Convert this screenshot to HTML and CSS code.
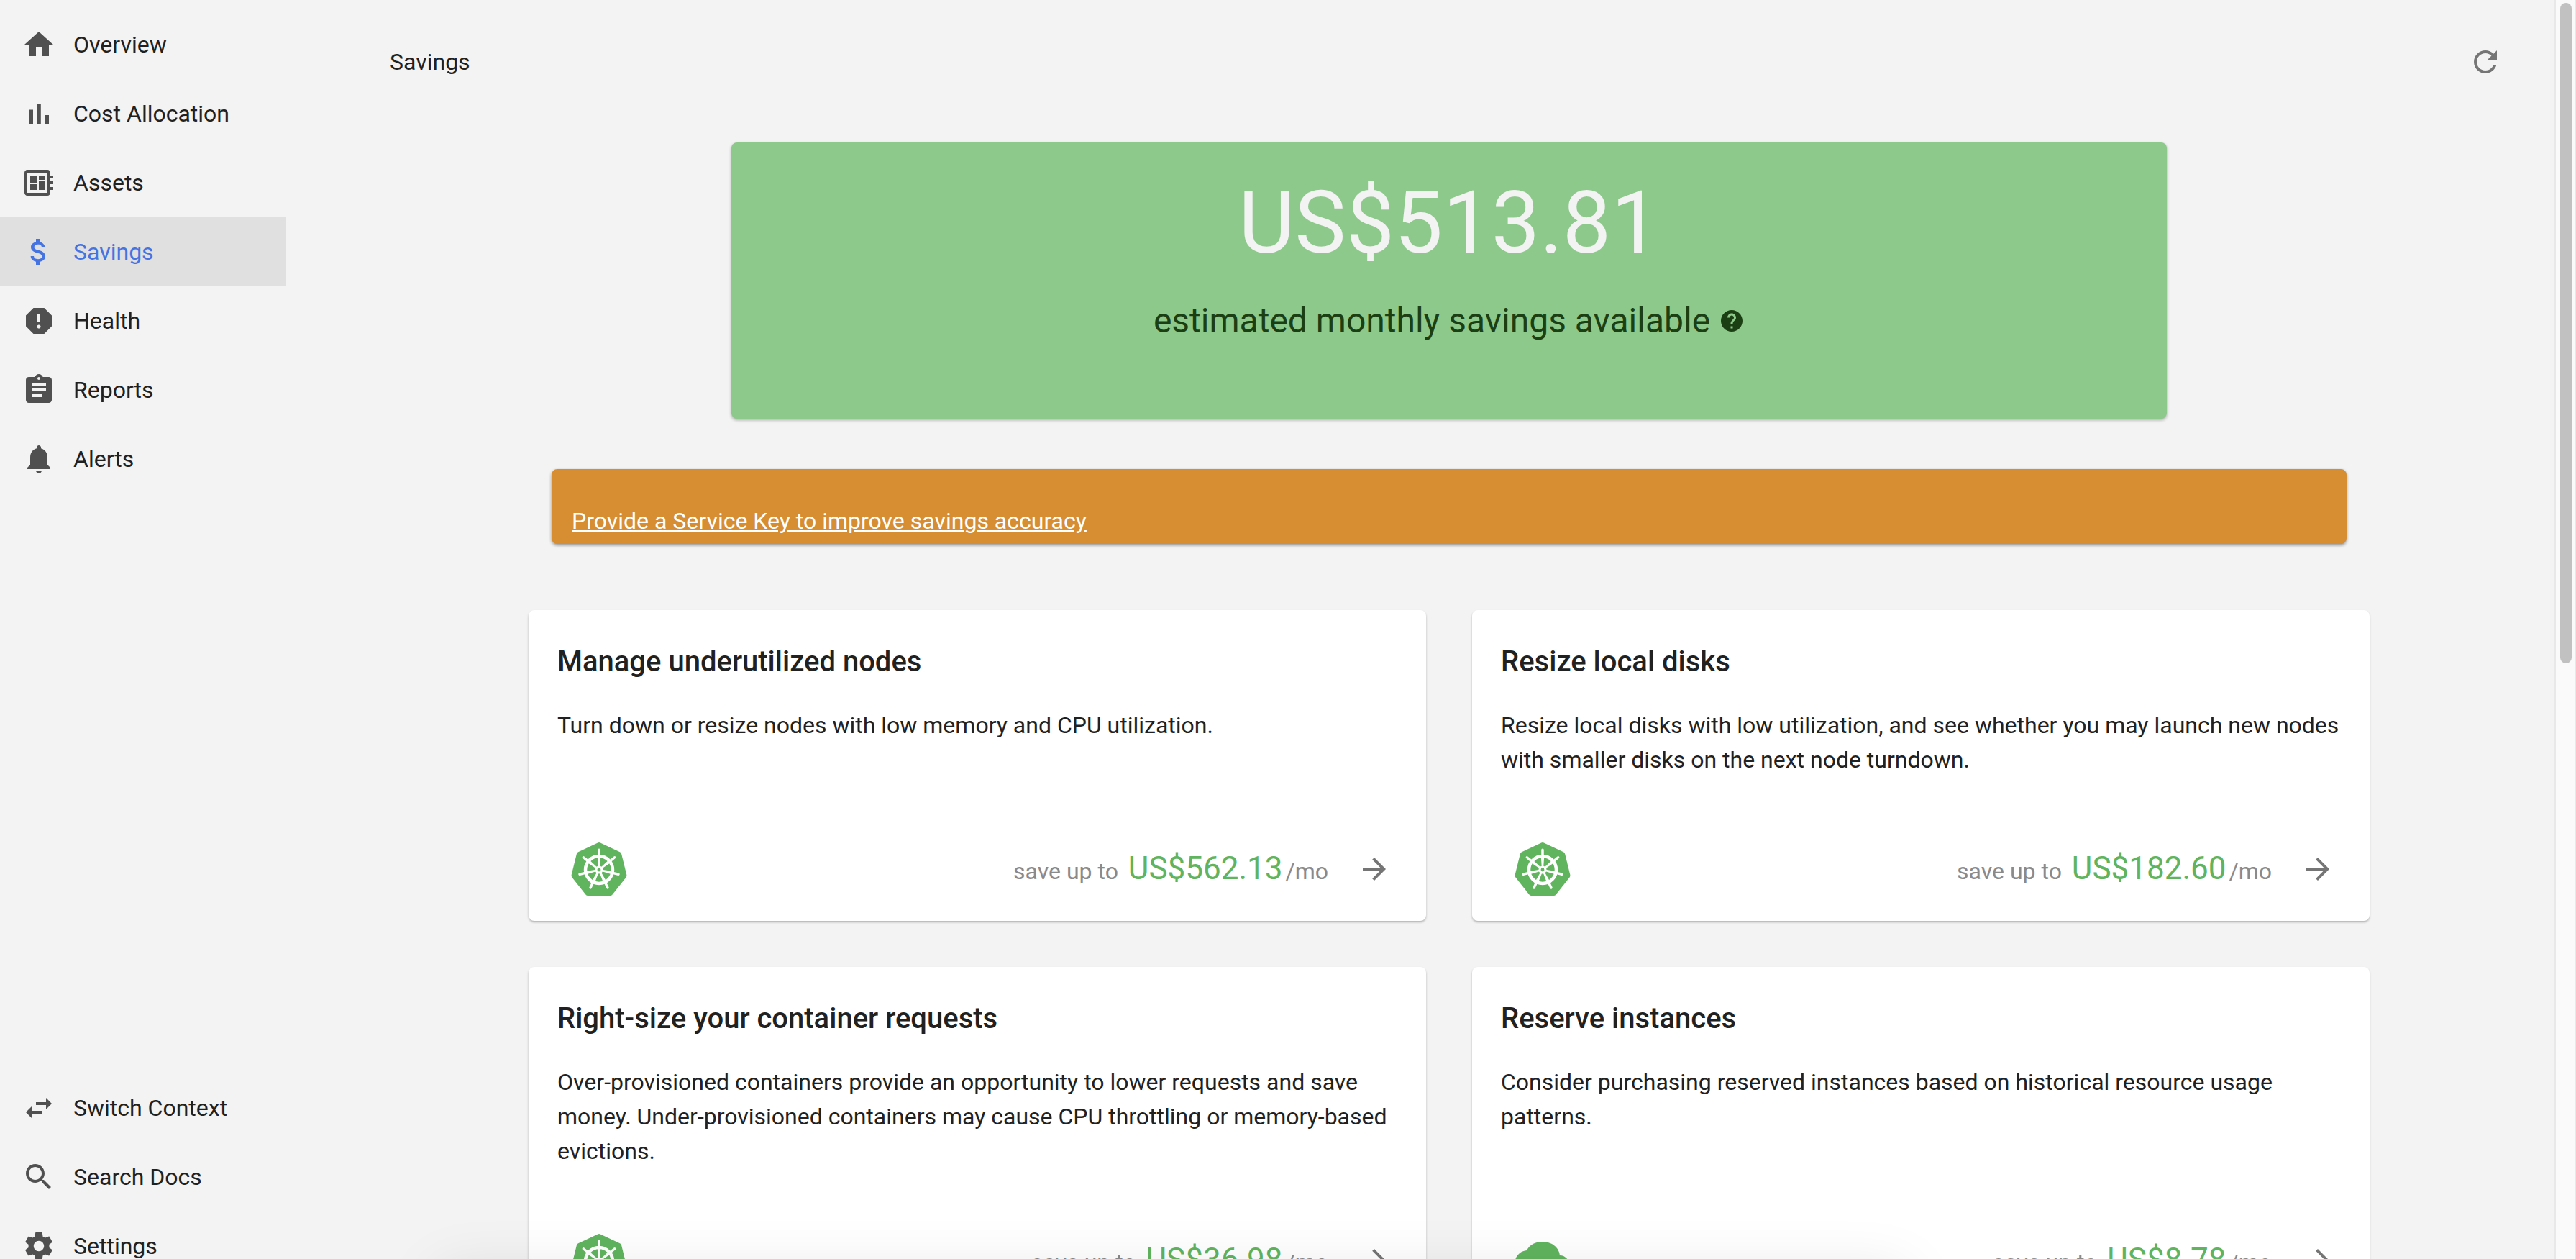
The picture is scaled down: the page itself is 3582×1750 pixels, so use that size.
FILE: index.html
```html
<!DOCTYPE html>
<html lang="en">
<head>
<meta charset="utf-8">
<meta name="viewport" content="width=device-width, initial-scale=1">
<title>Savings</title>
<link rel="stylesheet" href="styles.css">
</head>
<body>
<svg class="sprite" aria-hidden="true">
  <symbol id="arrow" viewBox="0 0 24 24"><path d="M12 4l-1.41 1.41L16.17 11H4v2h12.17l-5.58 5.59L12 20l8-8z"/></symbol>
  <symbol id="helm" viewBox="-39 -40 78 78">
    <path fill="#60b45e" stroke="#60b45e" stroke-width="8" stroke-linejoin="round" d="M0-33 26.500-20.500 33.500 7.800 15 31H-15L-33.500 7.800-26.500-20.500z"/>
    <g fill="none" stroke="#fff" stroke-linecap="round">
      <circle r="18.500" stroke-width="4.400"/>
      <g stroke-width="3.400">
        <path d="M0-27V-18"/>
        <path d="M0-27V-18" transform="rotate(51.430)"/>
        <path d="M0-27V-18" transform="rotate(102.860)"/>
        <path d="M0-27V-18" transform="rotate(154.290)"/>
        <path d="M0-27V-18" transform="rotate(205.710)"/>
        <path d="M0-27V-18" transform="rotate(257.140)"/>
        <path d="M0-27V-18" transform="rotate(308.570)"/>
      </g>
    </g>
    <g fill="#fff">
      <path d="M-2.200-18H2.200L1-2H-1z"/>
      <path d="M-2.200-18H2.200L1-2H-1z" transform="rotate(51.430)"/>
      <path d="M-2.200-18H2.200L1-2H-1z" transform="rotate(102.860)"/>
      <path d="M-2.200-18H2.200L1-2H-1z" transform="rotate(154.290)"/>
      <path d="M-2.200-18H2.200L1-2H-1z" transform="rotate(205.710)"/>
      <path d="M-2.200-18H2.200L1-2H-1z" transform="rotate(257.140)"/>
      <path d="M-2.200-18H2.200L1-2H-1z" transform="rotate(308.570)"/>
      <circle r="5.400"/>
    </g>
    <circle r="2.400" fill="#60b45e"/>
  </symbol>
  <symbol id="cloud" viewBox="-40 -40 80 80"><path fill="#60b45e" d="M-22-14C-18-22-10-26 0-26 13-26 23-18 24-7 29-7 34-4 36 1 40 10 35 23 22 24H-22C-33 24-39 17-39 6-39-5-32-13-22-14z"/></symbol>
</svg>
<div class="app">
  <aside class="sidebar">
    <nav class="menu" aria-label="Main">
      <a class="item" href="#"><svg class="icon" viewBox="0 0 24 24"><path d="M10 20v-6h4v6h5v-8h3L12 3 2 12h3v8z"/></svg>Overview</a>
      <a class="item" href="#"><svg class="icon" viewBox="0 0 24 24"><path d="M5 9.200h3V19H5zM10.600 5h2.800v14h-2.800zm5.600 8H19v6h-2.800z"/></svg>Cost Allocation</a>
      <a class="item" href="#"><svg class="icon" viewBox="0 0 24 24"><path d="M22 9V7h-2V5c0-1.100-.9-2-2-2H4c-1.100 0-2 .9-2 2v14c0 1.100.9 2 2 2h14c1.100 0 2-.9 2-2v-2h2v-2h-2v-2h2v-2h-2V9h2zm-4 10H4V5h14v14zM6 13h5v4H6zm6-6h4v3h-4zM6 7h5v5H6zm6 4h4v6h-4z"/></svg>Assets</a>
      <a class="item item-active" href="#" aria-current="page"><svg class="icon" viewBox="0 0 24 24"><path d="M11.800 10.900c-2.270-.59-3-1.200-3-2.150 0-1.090 1.010-1.850 2.700-1.850 1.780 0 2.440.85 2.500 2.100h2.210c-.07-1.720-1.120-3.300-3.210-3.810V3h-3v2.160c-1.940.42-3.500 1.680-3.500 3.610 0 2.310 1.910 3.460 4.700 4.130 2.500.6 3 1.480 3 2.410 0 .69-.49 1.790-2.700 1.790-2.060 0-2.870-.92-2.980-2.100h-2.200c.12 2.190 1.760 3.420 3.680 3.830V21h3v-2.150c1.950-.37 3.500-1.500 3.500-3.550 0-2.840-2.430-3.810-4.700-4.400z"/></svg>Savings</a>
      <a class="item" href="#"><svg class="icon" viewBox="0 0 24 24"><path d="M15.730 3H8.270L3 8.270v7.460L8.270 21h7.460L21 15.730V8.270L15.730 3zM12 17.300c-.72 0-1.300-.58-1.300-1.300 0-.72.58-1.300 1.300-1.300.72 0 1.300.58 1.300 1.300 0 .72-.58 1.300-1.300 1.300zm1-4.300h-2V7h2v6z"/></svg>Health</a>
      <a class="item" href="#"><svg class="icon" viewBox="0 0 24 24"><path d="M19 3h-4.180C14.400 1.840 13.300 1 12 1c-1.300 0-2.400.84-2.820 2H5c-1.100 0-2 .9-2 2v14c0 1.100.9 2 2 2h14c1.100 0 2-.9 2-2V5c0-1.100-.9-2-2-2zm-7 0c.55 0 1 .45 1 1s-.45 1-1 1-1-.45-1-1 .45-1 1-1zm2 14H7v-2h7v2zm3-4H7v-2h10v2zm0-4H7V7h10v2z"/></svg>Reports</a>
      <a class="item" href="#"><svg class="icon" viewBox="0 0 24 24"><path d="M12 22c1.100 0 2-.9 2-2h-4c0 1.100.89 2 2 2zm6-6v-5c0-3.070-1.640-5.640-4.500-6.320V4c0-.83-.67-1.500-1.500-1.500s-1.500.67-1.500 1.500v.68C7.630 5.360 6 7.920 6 11v5l-2 2v1h16v-1l-2-2z"/></svg>Alerts</a>
    </nav>
    <nav class="menu" aria-label="Tools">
      <a class="item" href="#"><svg class="icon" viewBox="0 0 24 24"><path d="M6.990 11L3 15l3.990 4v-3H14v-2H6.990v-3zM21 9l-3.990-4v3H10v2h7.010v3L21 9z"/></svg>Switch Context</a>
      <a class="item" href="#"><svg class="icon" viewBox="0 0 24 24"><path d="M15.500 14h-.79l-.28-.27C15.410 12.590 16 11.110 16 9.500 16 5.910 13.090 3 9.500 3S3 5.910 3 9.500 5.910 16 9.500 16c1.610 0 3.090-.59 4.230-1.570l.27.28v.79l5 4.990L20.490 19l-4.990-5zm-6 0C7.010 14 5 11.990 5 9.500S7.010 5 9.500 5 14 7.010 14 9.500 11.990 14 9.500 14z"/></svg>Search Docs</a>
      <a class="item" href="#"><svg class="icon" viewBox="0 0 24 24"><path d="M19.140 12.940c.04-.3.060-.61.060-.94 0-.32-.02-.64-.07-.94l2.030-1.580c.18-.14.23-.41.12-.61l-1.920-3.320c-.12-.22-.37-.29-.59-.22l-2.390.96c-.5-.38-1.030-.7-1.620-.94l-.36-2.540c-.04-.24-.24-.41-.48-.41h-3.840c-.24 0-.43.17-.47.41l-.36 2.540c-.59.24-1.130.57-1.620.94l-2.390-.96c-.22-.08-.47 0-.59.22L2.740 8.870c-.12.21-.08.47.12.61l2.030 1.580c-.05.3-.09.63-.09.94s.02.640.07.940l-2.030 1.580c-.18.14-.23.41-.12.61l1.920 3.320c.12.22.37.29.59.22l2.390-.96c.5.38 1.030.7 1.620.94l.36 2.540c.05.24.24.41.48.41h3.840c.24 0 .44-.17.47-.41l.36-2.540c.59-.24 1.130-.56 1.620-.94l2.390.96c.22.08.47 0 .59-.22l1.920-3.320c.12-.22.07-.47-.12-.61l-2.010-1.580zM12 15.600c-1.980 0-3.600-1.620-3.600-3.600s1.620-3.600 3.600-3.600 3.600 1.620 3.600 3.600-1.620 3.600-3.600 3.600z"/></svg>Settings</a>
    </nav>
  </aside>
  <main class="main">
    <header class="topbar">
      <h1 class="page-title">Savings</h1>
      <button class="refresh" type="button" aria-label="Refresh"><svg class="icon" viewBox="0 0 24 24"><path d="M17.650 6.350C16.200 4.900 14.210 4 12 4c-4.420 0-7.990 3.580-7.990 8s3.570 8 7.990 8c3.730 0 6.840-2.550 7.730-6h-2.080c-.82 2.330-3.040 4-5.650 4-3.310 0-6-2.690-6-6s2.690-6 6-6c1.660 0 3.140.69 4.220 1.780L13 11h7V4l-2.350 2.350z"/></svg></button>
    </header>
    <div class="content">
      <section class="hero">
        <p class="hero-amount">US$513.81</p>
        <p class="hero-label">estimated monthly savings available <svg class="help" viewBox="0 0 24 24"><path d="M12 2C6.480 2 2 6.480 2 12s4.480 10 10 10 10-4.480 10-10S17.520 2 12 2zm1 17h-2v-2h2v2zm2.070-7.750l-.9.920C13.450 12.900 13 13.500 13 15h-2v-.5c0-1.100.45-2.100 1.170-2.830l1.240-1.260c.37-.36.59-.86.59-1.410 0-1.100-.9-2-2-2s-2 .9-2 2H8c0-2.210 1.790-4 4-4s4 1.790 4 4c0 .88-.36 1.680-.93 2.250z"/></svg></p>
      </section>
      <div class="notice"><a class="notice-link" href="#">Provide a Service Key to improve savings accuracy</a></div>
      <div class="cards">
        <article class="card">
          <h2 class="card-title">Manage underutilized nodes</h2>
          <p class="card-text">Turn down or resize nodes with low memory and CPU utilization.</p>
          <div class="card-foot"><svg class="logo"><use href="#helm"/></svg><p class="saving">save up to <span class="amount">US$562.13</span>/mo</p><button class="go" type="button" aria-label="Open"><svg class="icon"><use href="#arrow"/></svg></button></div>
        </article>
        <article class="card">
          <h2 class="card-title">Resize local disks</h2>
          <p class="card-text">Resize local disks with low utilization, and see whether you may launch new nodes with smaller disks on the next node turndown.</p>
          <div class="card-foot"><svg class="logo"><use href="#helm"/></svg><p class="saving">save up to <span class="amount">US$182.60</span>/mo</p><button class="go" type="button" aria-label="Open"><svg class="icon"><use href="#arrow"/></svg></button></div>
        </article>
        <article class="card">
          <h2 class="card-title">Right-size your container requests</h2>
          <p class="card-text">Over-provisioned containers provide an opportunity to lower requests and save money. Under-provisioned containers may cause CPU throttling or memory-based evictions.</p>
          <div class="card-foot"><svg class="logo"><use href="#helm"/></svg><p class="saving">save up to <span class="amount">US$36.98</span>/mo</p><button class="go" type="button" aria-label="Open"><svg class="icon"><use href="#arrow"/></svg></button></div>
        </article>
        <article class="card">
          <h2 class="card-title">Reserve instances</h2>
          <p class="card-text">Consider purchasing reserved instances based on historical resource usage patterns.</p>
          <div class="card-foot"><svg class="logo"><use href="#cloud"/></svg><p class="saving">save up to <span class="amount">US$8.78</span>/mo</p><button class="go" type="button" aria-label="Open"><svg class="icon"><use href="#arrow"/></svg></button></div>
        </article>
      </div>
    </div>
  </main>
  <div class="scroll-track" aria-hidden="true"><div class="scroll-thumb"></div></div>
</div>
<div class="snackbar-shade" aria-hidden="true"></div>
</body>
</html>
```
FILE: styles.css
```css
* {
  box-sizing: border-box;
}

body {
  margin: 0;
  background: #f3f3f3;
  color: #212121;
  font-family: Roboto, "Liberation Sans", sans-serif;
  font-size: 32px;
  line-height: 48px;
}

h1,
h2,
p {
  margin: 0;
}

button {
  padding: 0;
  border: 0;
  background: none;
  color: inherit;
  font: inherit;
}

.sprite {
  display: none;
}

.icon {
  display: block;
  flex: none;
  width: 48px;
  height: 48px;
  fill: currentColor;
}

.app {
  display: flex;
  height: 100vh;
  overflow: hidden;
}

/* Sidebar */

.sidebar {
  display: flex;
  flex: none;
  flex-direction: column;
  justify-content: space-between;
  width: 398px;
  height: calc(100vh + 30px);
  padding-top: 14px;
}

.item {
  display: flex;
  align-items: center;
  gap: 24px;
  height: 96px;
  padding-left: 30px;
  color: #212121;
  text-decoration: none;
}

.item .icon {
  color: #505050;
}

.item-active {
  background: #e0e0e0;
}

.item-active,
.item-active .icon {
  color: #4673e2;
}

/* Main column */

.main {
  flex: 1;
  min-width: 0;
  padding: 62px 64px 0 144px;
}

.topbar {
  display: flex;
  align-items: center;
  justify-content: space-between;
  margin-bottom: 88px;
  padding-right: 8px;
}

.page-title {
  font-size: 32px;
  font-weight: 400;
  line-height: 48px;
}

.refresh,
.go {
  color: #757575;
}

.content {
  display: flex;
  flex-direction: column;
  max-width: 2560px;
  margin: 0 auto;
  padding: 0 32px;
}

.hero,
.notice,
.card {
  border-radius: 8px;
}

.hero {
  align-self: center;
  width: 80%;
  min-height: 384px;
  padding-top: 40px;
  background: #8dc98b;
  box-shadow: 0 2px 4px rgba(0, 0, 0, 0.3);
  text-align: center;
}

.hero-amount {
  color: #f3f3f3;
  font-size: 120px;
  line-height: 144px;
}

.hero-label {
  display: flex;
  align-items: center;
  justify-content: center;
  gap: 12px;
  margin-top: 32px;
  color: #1b3f13;
  font-size: 48px;
  line-height: 64px;
}

.help {
  width: 36px;
  height: 36px;
  fill: currentColor;
}

.notice {
  margin-top: 70px;
  padding: 48px 28px 8px;
  background: #d78d31;
  box-shadow: 0 2px 4px rgba(0, 0, 0, 0.4);
}

.notice-link {
  color: #fff;
}

/* Cards */

.cards {
  display: grid;
  grid-template-columns: 1fr 1fr;
  gap: 64px;
  margin: 92px -32px 0;
}

.card {
  display: flex;
  flex-direction: column;
  padding: 40px 40px 32px;
  background: #fff;
  box-shadow: 0 2px 3px rgba(0, 0, 0, 0.25);
}

.card-title {
  font-size: 40px;
  font-weight: 500;
  line-height: 64px;
}

.card-text {
  margin: 32px 0 88px;
}

.card-foot {
  display: flex;
  align-items: center;
  margin-top: auto;
}

.logo {
  width: 80px;
  height: 80px;
  margin-left: 18px;
}

.saving {
  margin-left: auto;
  padding-top: 2px;
  color: #8a8a8a;
}

.amount {
  margin: 0 4px 0 6px;
  color: #60b45e;
  font-size: 44px;
}

.go {
  margin: 0 8px 0 40px;
}

/* Scroll bar */

.scroll-track {
  flex: none;
  width: 30px;
  padding: 4px 4px 4px 6px;
  border: solid #e8e8e8;
  border-width: 0 2px;
  background: #fafafa;
}

.scroll-thumb {
  width: 16px;
  height: 52.7%;
  border-radius: 8px;
  background: #c1c1c1;
}

.snackbar-shade {
  position: fixed;
  top: 100%;
  left: 17%;
  right: 26%;
  height: 80px;
  margin-top: 16px;
  box-shadow: 0 0 80px rgba(0, 0, 0, 0.1);
  pointer-events: none;
}
```
